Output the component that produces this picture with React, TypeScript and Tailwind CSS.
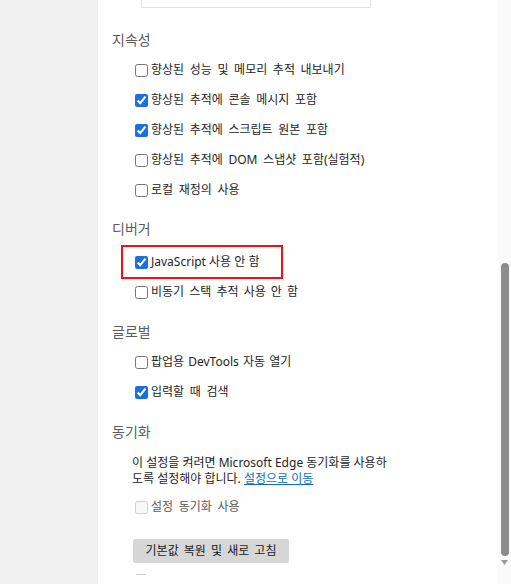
const font = { fontFamily: '"Segoe UI", "Noto Sans", "Noto Sans CJK KR", sans-serif' };

function Heading({ children, className = '' }: { children: React.ReactNode; className?: string }) {
  return (
    <div className={`h-[24px] leading-[24px] pl-[14px] text-[14px] text-[#5c5c5c] ${className}`}>{children}</div>
  );
}

function Row({ label, checked = false, disabled = false, className = 'h-[30px] [word-spacing:2.5px]' }: { label: string; checked?: boolean; disabled?: boolean; className?: string }) {
  return (
    <label className={`flex items-center pl-[37px] text-[12px] ${disabled ? 'text-[#5a5a5a]' : 'text-[#242424]'} ${className}`}>
      <input
        type="checkbox"
        defaultChecked={checked}
        disabled={disabled}
        className="m-0 mr-[3px] w-[13px] h-[13px] accent-[#1a6fe3]"
      />
      <span className="leading-[16px]">{label}</span>
    </label>
  );
}

export default function App() {
  return (
    <div className="flex w-[511px] h-[584px] overflow-hidden bg-white" style={font}>
      {/* sidebar strip */}
      <div className="w-[98px] shrink-0 bg-[#f0f0f0]" />

      {/* settings panel */}
      <div className="flex-1 flex flex-col">
        <div className="ml-[43px] w-[230px] h-[8px] border border-t-0 border-[#e0e0e0] rounded-b-[2px] overflow-hidden">
          <div className="-mt-[13px] pl-[13px] text-[12px] leading-[16px] text-[#b0b0b0]">사용</div>
        </div>

        <Heading className="mt-[20px]">지속성</Heading>
        <div className="mt-[3px]">
          <Row label="향상된 성능 및 메모리 추적 내보내기" />
          <Row label="향상된 추적에 콘솔 메시지 포함" checked />
          <Row label="향상된 추적에 스크립트 원본 포함" checked />
          <Row label="향상된 추적에 DOM 스냅샷 포함(실험적)" />
          <Row label="로컬 재정의 사용" />
        </div>

        <Heading className="mt-[12px]">디버거</Heading>
        <div className="mt-[4px] ml-[23px] w-[162px] h-[34px] border-2 border-[#e5141f] flex items-center pl-[12px] text-[12px] text-[#242424]">
          <input type="checkbox" defaultChecked className="m-0 mr-[3px] w-[13px] h-[13px] accent-[#1a6fe3]" />
          <span className="leading-[16px]">JavaScript 사용 안 함</span>
        </div>
        <Row label="비동기 스택 추적 사용 안 함" className="h-[26px] [word-spacing:2px]" />

        <Heading className="mt-[15px]">글로벌</Heading>
        <div className="mt-[3px]">
          <Row label="팝업용 DevTools 자동 열기" className="h-[30px] [word-spacing:1px]" />
          <Row label="입력할 때 검색" checked />
        </div>

        <Heading className="mt-[13px]">동기화</Heading>
        <p className="mt-[11px] pl-[34px] text-[12px] leading-[16px] text-[#242424]">
          이 설정을 켜려면 Microsoft Edge 동기화를 사용하
          <br />
          도록 설정해야 합니다. <a href="#" className="text-[#0f6cbd] underline">설정으로 이동</a>
        </p>
        <div className="mt-[5px]">
          <Row label="설정 동기화 사용" disabled />
        </div>

        <button className="mt-[17px] ml-[35px] w-[156px] h-[24px] bg-[#d6d6d6] rounded-[2px] text-[12px] text-[#202020] [word-spacing:2px]">
          기본값 복원 및 새로 고침
        </button>
        <div className="mt-[11px] ml-[38px] w-[10px] h-[1px] bg-[#cfcfcf]" />
      </div>

      {/* scrollbar */}
      <div className="w-[13px] shrink-0 bg-[#fafafa] flex flex-col items-center">
        <div className="mt-[263px] w-[8px] h-[293px] rounded-full bg-[#8c8c8c]" />
        <svg className="mt-[4px]" width="7" height="5" viewBox="0 0 7 5">
          <path d="M0 0h7L3.5 5z" fill="#999" />
        </svg>
      </div>
    </div>
  );
}
